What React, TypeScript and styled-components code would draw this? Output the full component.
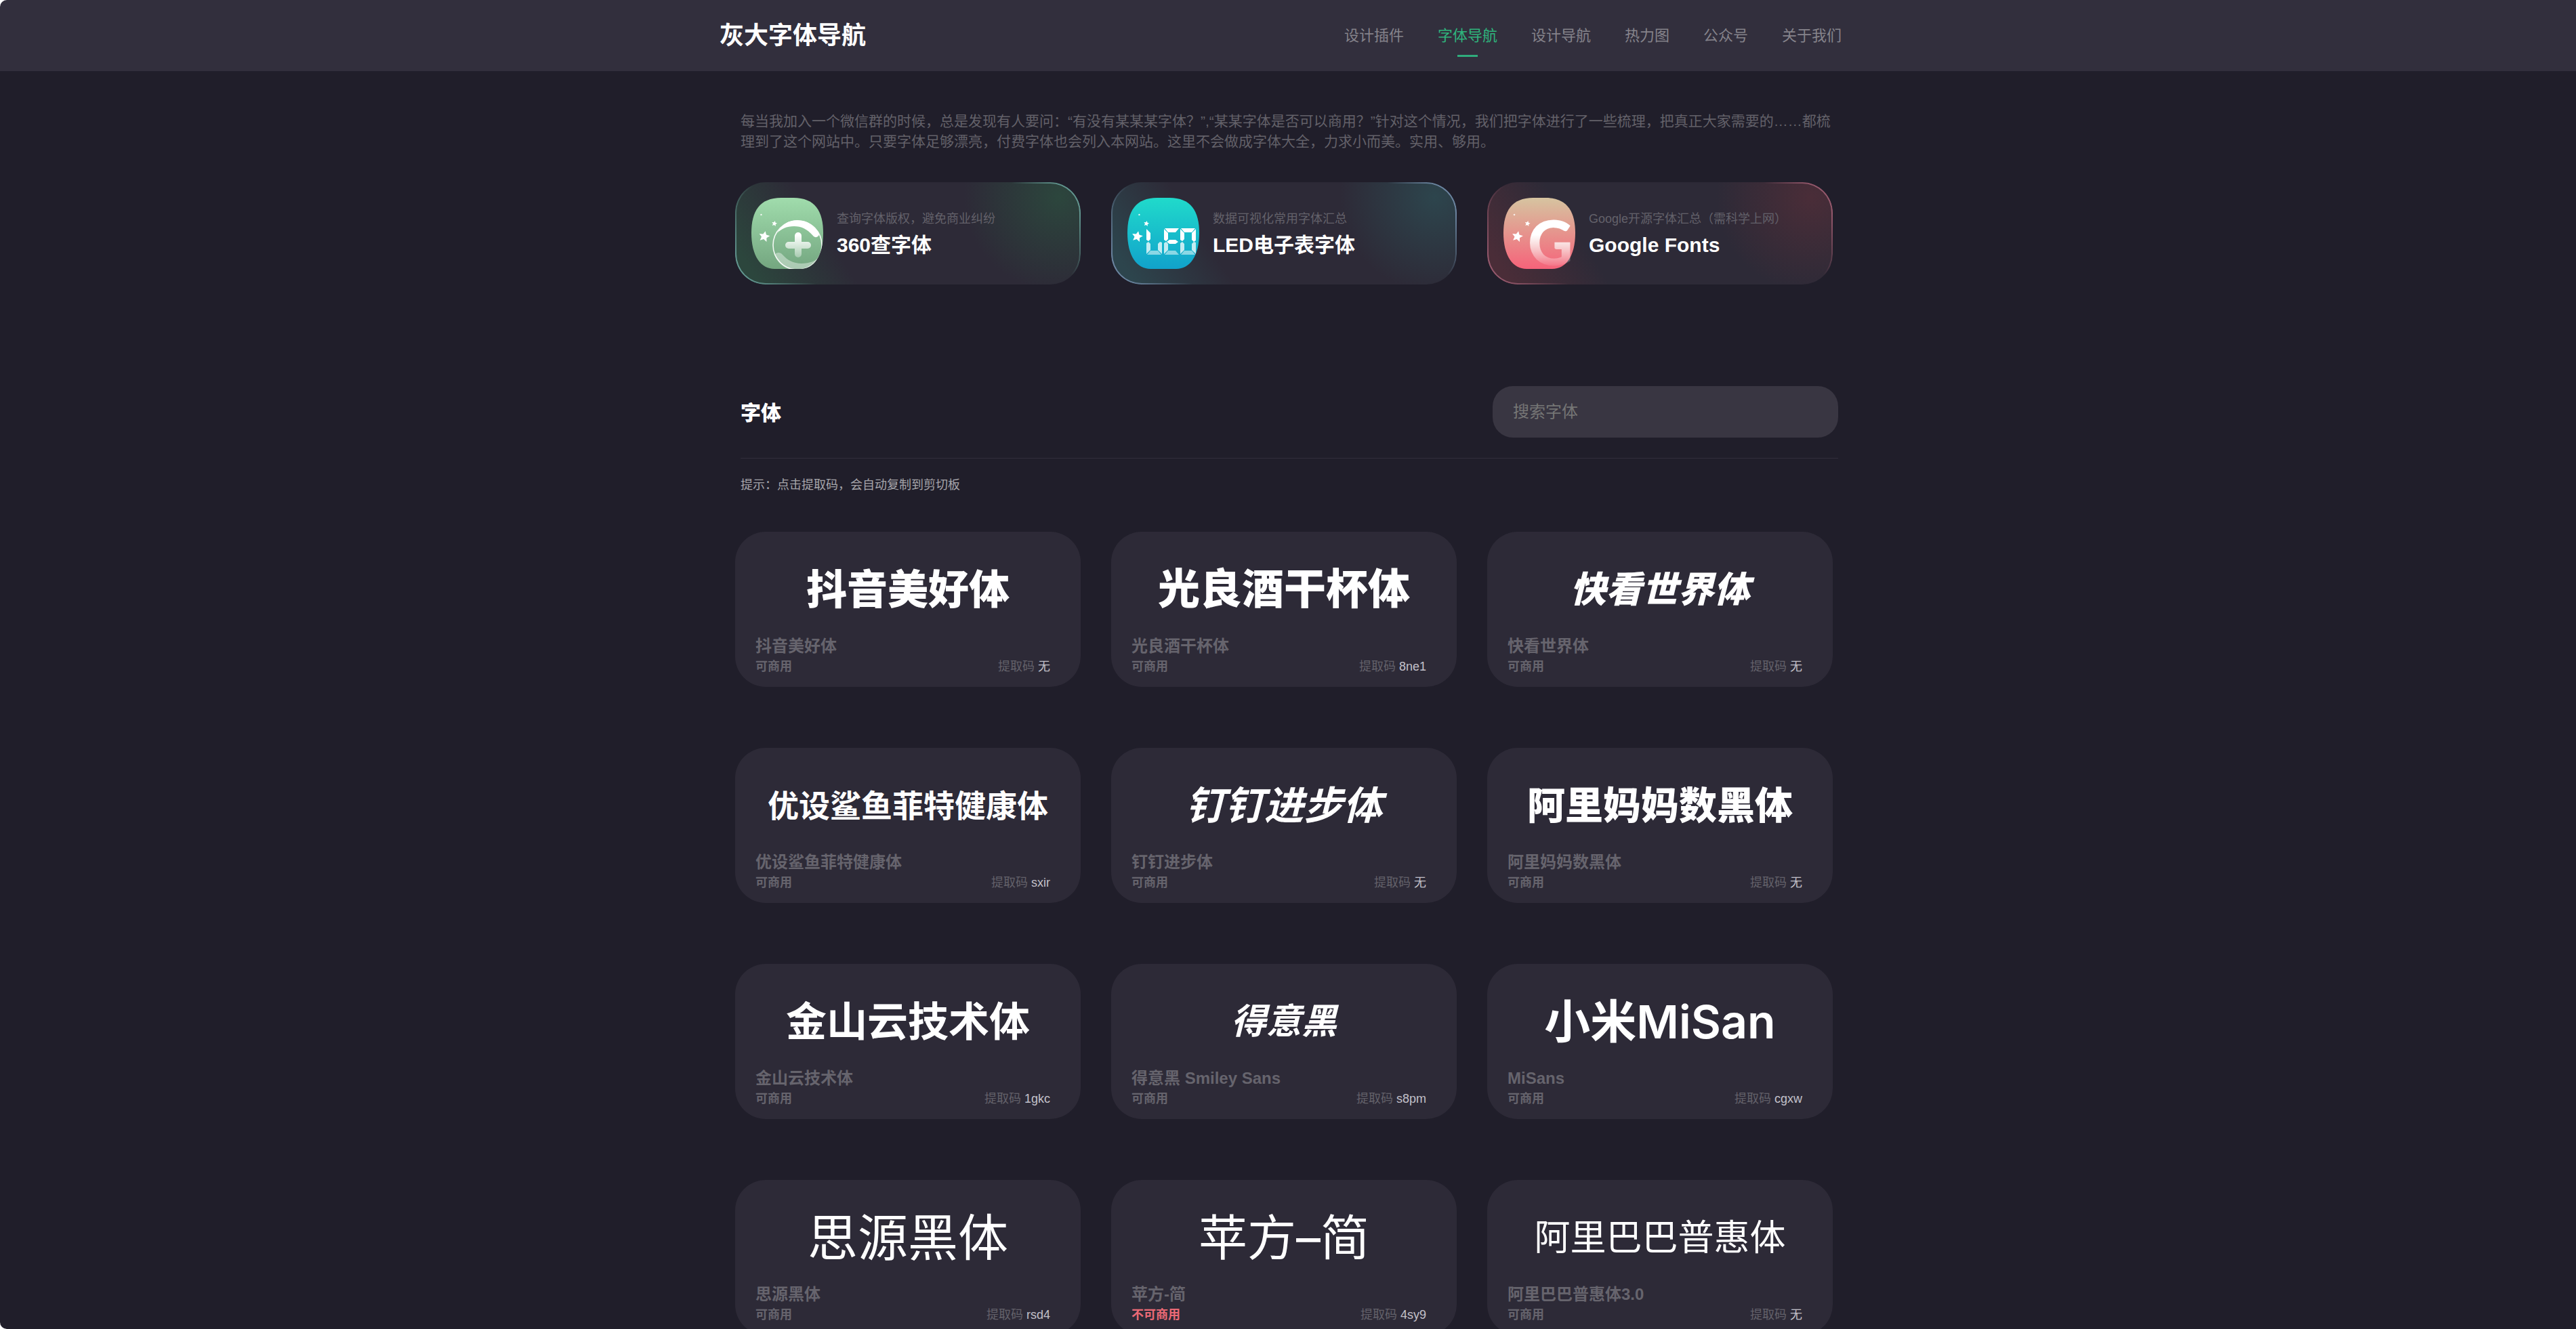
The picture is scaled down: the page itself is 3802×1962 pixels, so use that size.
import React, { useState } from "react";
import styled, { createGlobalStyle } from "styled-components";

const GlobalStyle = createGlobalStyle`
  *, *::before, *::after { box-sizing: border-box; }
  html { background: #fff; }
  body {
    margin: 0;
    font-family: "Liberation Sans", "Noto Sans CJK SC", sans-serif;
    color: #fff;
  }
  a { color: inherit; text-decoration: none; }
  h1, h2, h3, p, ul { margin: 0; padding: 0; }
`;

const Shell = styled.div`
  height: 100vh;
  overflow: hidden auto;
  scrollbar-width: none;
  background: #201e2a;
  border-radius: 10px 0 0 10px;
`;

const Header = styled.header`
  background: #322f3d;
`;

const HeaderInner = styled.div`
  display: flex;
  align-items: center;
  justify-content: space-between;
  max-width: 1678px;
  height: 105px;
  margin: 0 auto;
  padding-right: 22px;
`;

const Brand = styled.h1`
  font-size: 36px;
  line-height: 52px;
  font-weight: 700;
`;

const Nav = styled.nav`
  display: flex;
  gap: 50px;
`;

const NavLink = styled.a<{ $active?: boolean }>`
  position: relative;
  font-size: 22px;
  line-height: 32px;
  color: ${(p) => (p.$active ? "#2fb47c" : "#85838b")};

  &::after {
    content: "";
    display: ${(p) => (p.$active ? "block" : "none")};
    position: absolute;
    left: 50%;
    bottom: -15px;
    width: 30px;
    height: 3px;
    margin-left: -15px;
    background: #2fac7c;
  }
`;

const Main = styled.main`
  max-width: 1632px;
  margin: 0 auto;
  padding: 59px 4px 90px 0;
`;

const Intro = styled.p`
  padding-left: 8px;
  font-size: 21px;
  line-height: 30px;
  color: #636169;
`;

const Grid = styled.div`
  display: grid;
  grid-template-columns: repeat(auto-fill, minmax(500px, 1fr));
  gap: 90px 45px;
  padding-right: 8px;
`;

const FeatureGrid = styled(Grid)`
  margin-top: 45px;
`;

const FontGrid = styled(Grid)`
  margin-top: 56px;
`;

const Feature = styled.a<{ $glow: string; $edge: string }>`
  position: relative;
  display: flex;
  align-items: center;
  gap: 20px;
  height: 151px;
  padding: 0 24px;
  border-radius: 45px;
  background:
    radial-gradient(circle at 478px 22px, ${(p) => p.$glow} 0, transparent 140px),
    linear-gradient(57deg, ${(p) => p.$glow} 6%, transparent 30%),
    #2d2a37;

  &::before {
    content: "";
    position: absolute;
    inset: 0;
    padding: 2px;
    border-radius: inherit;
    background: linear-gradient(
      57deg,
      ${(p) => p.$edge} 4%,
      transparent 20%,
      transparent 83%,
      ${(p) => p.$edge} 95%
    );
    mask: linear-gradient(#000 0 0) content-box exclude, linear-gradient(#000 0 0);
  }
`;

const FeatureIcon = styled.svg`
  flex: none;
  width: 106px;
  height: 105px;
  overflow: visible;
`;

const FeatureNote = styled.p`
  font-size: 18px;
  line-height: 34px;
  color: #63616a;
`;

const FeatureTitle = styled.h2`
  font-size: 30px;
  line-height: 44px;
  font-weight: 700;
`;

const SectionBar = styled.div`
  display: flex;
  align-items: center;
  justify-content: space-between;
  margin: 150px 0 0 8px;
  padding-bottom: 30px;
  border-bottom: 1px solid #312e3b;
`;

const SectionTitle = styled.h2`
  padding-top: 4px;
  font-size: 30px;
  line-height: 44px;
  font-weight: 900;
`;

const Search = styled.input`
  width: 510px;
  height: 76px;
  padding: 0 30px;
  border: 0;
  outline: 0;
  border-radius: 30px;
  background: #393642;
  font: inherit;
  font-size: 24px;
  color: #fff;

  &::placeholder {
    color: #757575;
  }
`;

const Tip = styled.p`
  margin-top: 26px;
  padding-left: 8px;
  font-size: 18px;
  line-height: 26px;
  color: #a6a5aa;
`;

const Card = styled.article`
  padding: 20px 45px 15px 30px;
  border-radius: 45px;
  background: #2d2a37;
`;

const Preview = styled.a<{ $size: number; $weight: number; $slanted?: boolean }>`
  display: flex;
  align-items: center;
  justify-content: center;
  height: 134px;
  margin-right: -15px;
  padding-bottom: 4px;
  font-family: "Inter", "Noto Sans CJK SC", sans-serif;
  font-size: ${(p) => p.$size}px;
  line-height: 1;
  font-weight: ${(p) => p.$weight};
  font-style: ${(p) => (p.$slanted ? "italic" : "normal")};
  white-space: nowrap;
`;

const CardName = styled.h3`
  font-size: 24px;
  line-height: 30px;
  font-weight: 700;
  color: #66646d;
`;

const CardFoot = styled.div`
  display: flex;
  align-items: center;
  justify-content: space-between;
  font-size: 18px;
  line-height: 30px;
  color: #63616a;
`;

const License = styled.span<{ $blocked?: boolean }>`
  font-weight: 700;
  color: ${(p) => (p.$blocked ? "#ec6a76" : "#66646d")};
`;

const Code = styled.button`
  padding: 0;
  border: 0;
  background: none;
  font: inherit;
  color: #c3c1ca;
  cursor: pointer;
`;

const STAR = "M0-8 2.4-3 8-2.4 3.8 1.4 5 7 0 4.2-5 7-3.8 1.4-8-2.4-2.4-3Z";
const TILE =
  "M0 52C0 20 12 0 44 0H62C94 0 106 20 106 52C106 86 92 105 72 105H34C14 105 0 86 0 52Z";

type TileProps = {
  id: string;
  from: string;
  to: string;
  stars: [number, number, number][];
  initial?: React.ReactNode;
  children?: React.ReactNode;
};

function Tile({ id, from, to, stars, initial, children }: TileProps) {
  return (
    <FeatureIcon viewBox="0 0 106 105" aria-hidden="true">
      <defs>
        <linearGradient id={`${id}-bg`} x1="0" y1="0" x2="0" y2="1">
          <stop offset="0" stopColor={from} />
          <stop offset="1" stopColor={to} />
        </linearGradient>
        <linearGradient id={`${id}-ink`} gradientUnits="userSpaceOnUse" x1="0" y1="33" x2="0" y2="105">
          <stop offset="0.3" stopColor="#fff" />
          <stop offset="1" stopColor="#fff" stopOpacity="0" />
        </linearGradient>
        <clipPath id={`${id}-clip`}>
          <path d={TILE} />
        </clipPath>
      </defs>
      <path d={TILE} fill={`url(#${id}-bg)`} />
      <g clipPath={`url(#${id}-clip)`}>
        {stars.map(([x, y, s]) => (
          <path key={x} d={STAR} fill="#fff" transform={`translate(${x} ${y}) rotate(12) scale(${s})`} />
        ))}
        {children}
      </g>
      {initial}
    </FeatureIcon>
  );
}

function PlusIcon() {
  return (
    <Tile id="plus" from="#a0dcac" to="#74a680" stars={[[19, 57, 1], [34, 38, 0.5], [14.5, 25, 0.2]]}>
      <circle cx="68" cy="70" r="36" fill="none" stroke="#fff" strokeWidth="1.6" strokeOpacity="0.9" />
      <path
        d="M38 52C45 39 55 33 68 33C83 33 95 42 100 53C100 58 94 60 91 56C82 46 74 42 63 42C52 42 44 46 38 52Z"
        fill="#fff"
      />
      <path
        d="M34 84C37 80 43 80 46 84C53 92 62 97 74 97C86 97 96 93 102 86C95 101 83 107 68 107C52 107 39 98 34 84Z"
        fill="#fff"
        fillOpacity="0.4"
      />
      <path d="M69 56V83M55 70H83" stroke="url(#plus-ink)" strokeWidth="10" strokeLinecap="round" />
    </Tile>
  );
}

/* Bars of one display cell, measured from its top left corner. */
const BARS: Record<string, string> = {
  a: "M1 0H22L17 6H6Z",
  b: "M23 1V18L20 20L17 17V7Z",
  c: "M23 38V21L20 20L17 23V32Z",
  d: "M1 39H22L17 33H6Z",
  e: "M0 38V22L3 20L6 23V32Z",
  f: "M0 1V17L3 19L6 16V7Z",
  g: "M4 20L8 17H17L21 20L17 23H8Z",
};

const CELLS: [number, string][] = [
  [28, "fedc"],
  [54, "afged"],
  [78, "abcdef"],
];

function DisplayIcon() {
  return (
    <Tile id="led" from="#20dacb" to="#11a2cb" stars={[[14.5, 57, 1], [28, 38, 0.5], [17.5, 25, 0.2]]}>
      {CELLS.map(([x, bars]) => (
        <g key={x} transform={`translate(${x} 45)`}>
          {bars.split("").map((bar) => (
            <path key={bar} d={BARS[bar]} fill="#fff" fillOpacity={bar === "d" ? 0.5 : "ce".includes(bar) ? 0.75 : 1} />
          ))}
        </g>
      ))}
    </Tile>
  );
}

function GoogleIcon() {
  return (
    <Tile
      id="goo"
      from="#d6c4a0"
      to="#f6637a"
      stars={[[20.5, 57, 1], [35.5, 38, 0.5], [16, 25, 0.2]]}
      initial={
        <text x="36" y="100" fill="url(#goo-ink)" fontFamily="Lato, sans-serif" fontWeight="900" fontSize="92">
          G
        </text>
      }
    />
  );
}

const NAV = ["设计插件", "字体导航", "设计导航", "热力图", "公众号", "关于我们"];

const FEATURES = [
  { title: "360查字体", note: "查询字体版权，避免商业纠纷", glow: "#2c463d", edge: "#629590", icon: <PlusIcon /> },
  { title: "LED电子表字体", note: "数据可视化常用字体汇总", glow: "#2d454d", edge: "#6c84a0", icon: <DisplayIcon /> },
  { title: "Google Fonts", note: "Google开源字体汇总（需科学上网）", glow: "#4a2d38", edge: "#95596d", icon: <GoogleIcon /> },
];

type FontItem = {
  name: string;
  sample?: string;
  code: string;
  size: number;
  weight: number;
  slanted?: boolean;
  blocked?: boolean;
};

const FONTS: FontItem[] = [
  { name: "抖音美好体", code: "无", size: 60, weight: 900 },
  { name: "光良酒干杯体", code: "8ne1", size: 62, weight: 900 },
  { name: "快看世界体", code: "无", size: 53, weight: 900, slanted: true },
  { name: "优设鲨鱼菲特健康体", code: "sxir", size: 46, weight: 700 },
  { name: "钉钉进步体", code: "无", size: 58, weight: 700, slanted: true },
  { name: "阿里妈妈数黑体", code: "无", size: 56, weight: 900 },
  { name: "金山云技术体", code: "1gkc", size: 60, weight: 700 },
  { name: "得意黑 Smiley Sans", sample: "得意黑", code: "s8pm", size: 52, weight: 700, slanted: true },
  { name: "MiSans", sample: "小米MiSan", code: "cgxw", size: 68, weight: 600 },
  { name: "思源黑体", code: "rsd4", size: 74, weight: 400 },
  { name: "苹方-简", sample: "苹方–简", code: "4sy9", size: 72, weight: 400, blocked: true },
  { name: "阿里巴巴普惠体3.0", sample: "阿里巴巴普惠体", code: "无", size: 53, weight: 400 },
];

export default function App() {
  const [query, setQuery] = useState("");
  const shown = FONTS.filter((f) => f.name.toLowerCase().includes(query.trim().toLowerCase()));

  return (
    <Shell>
      <GlobalStyle />
      <Header>
        <HeaderInner>
          <Brand>灰大字体导航</Brand>
          <Nav>
            {NAV.map((label) => (
              <NavLink key={label} href="#" $active={label === "字体导航"}>
                {label}
              </NavLink>
            ))}
          </Nav>
        </HeaderInner>
      </Header>
      <Main>
        <Intro>
          每当我加入一个微信群的时候，总是发现有人要问：“有没有某某某字体？”,“某某字体是否可以商用？”针对这个情况，我们把字体进行了一些梳理，把真正大家需要的……都梳理到了这个网站中。只要字体足够漂亮，付费字体也会列入本网站。这里不会做成字体大全，力求小而美。实用、够用。
        </Intro>
        <FeatureGrid>
          {FEATURES.map((f) => (
            <Feature key={f.title} href="#" $glow={f.glow} $edge={f.edge}>
              {f.icon}
              <div>
                <FeatureNote>{f.note}</FeatureNote>
                <FeatureTitle>{f.title}</FeatureTitle>
              </div>
            </Feature>
          ))}
        </FeatureGrid>
        <SectionBar>
          <SectionTitle>字体</SectionTitle>
          <Search
            type="text"
            aria-label="搜索字体"
            placeholder="搜索字体"
            value={query}
            onChange={(e) => setQuery(e.target.value)}
          />
        </SectionBar>
        <Tip>提示：点击提取码，会自动复制到剪切板</Tip>
        <FontGrid>
          {shown.map((f) => (
            <Card key={f.name}>
              <Preview href="#" $size={f.size} $weight={f.weight} $slanted={f.slanted}>
                {f.sample ?? f.name}
              </Preview>
              <CardName>{f.name}</CardName>
              <CardFoot>
                <License $blocked={f.blocked}>{f.blocked ? "不可商用" : "可商用"}</License>
                <span>
                  提取码{" "}
                  <Code type="button" onClick={() => navigator.clipboard?.writeText(f.code)}>
                    {f.code}
                  </Code>
                </span>
              </CardFoot>
            </Card>
          ))}
        </FontGrid>
      </Main>
    </Shell>
  );
}
